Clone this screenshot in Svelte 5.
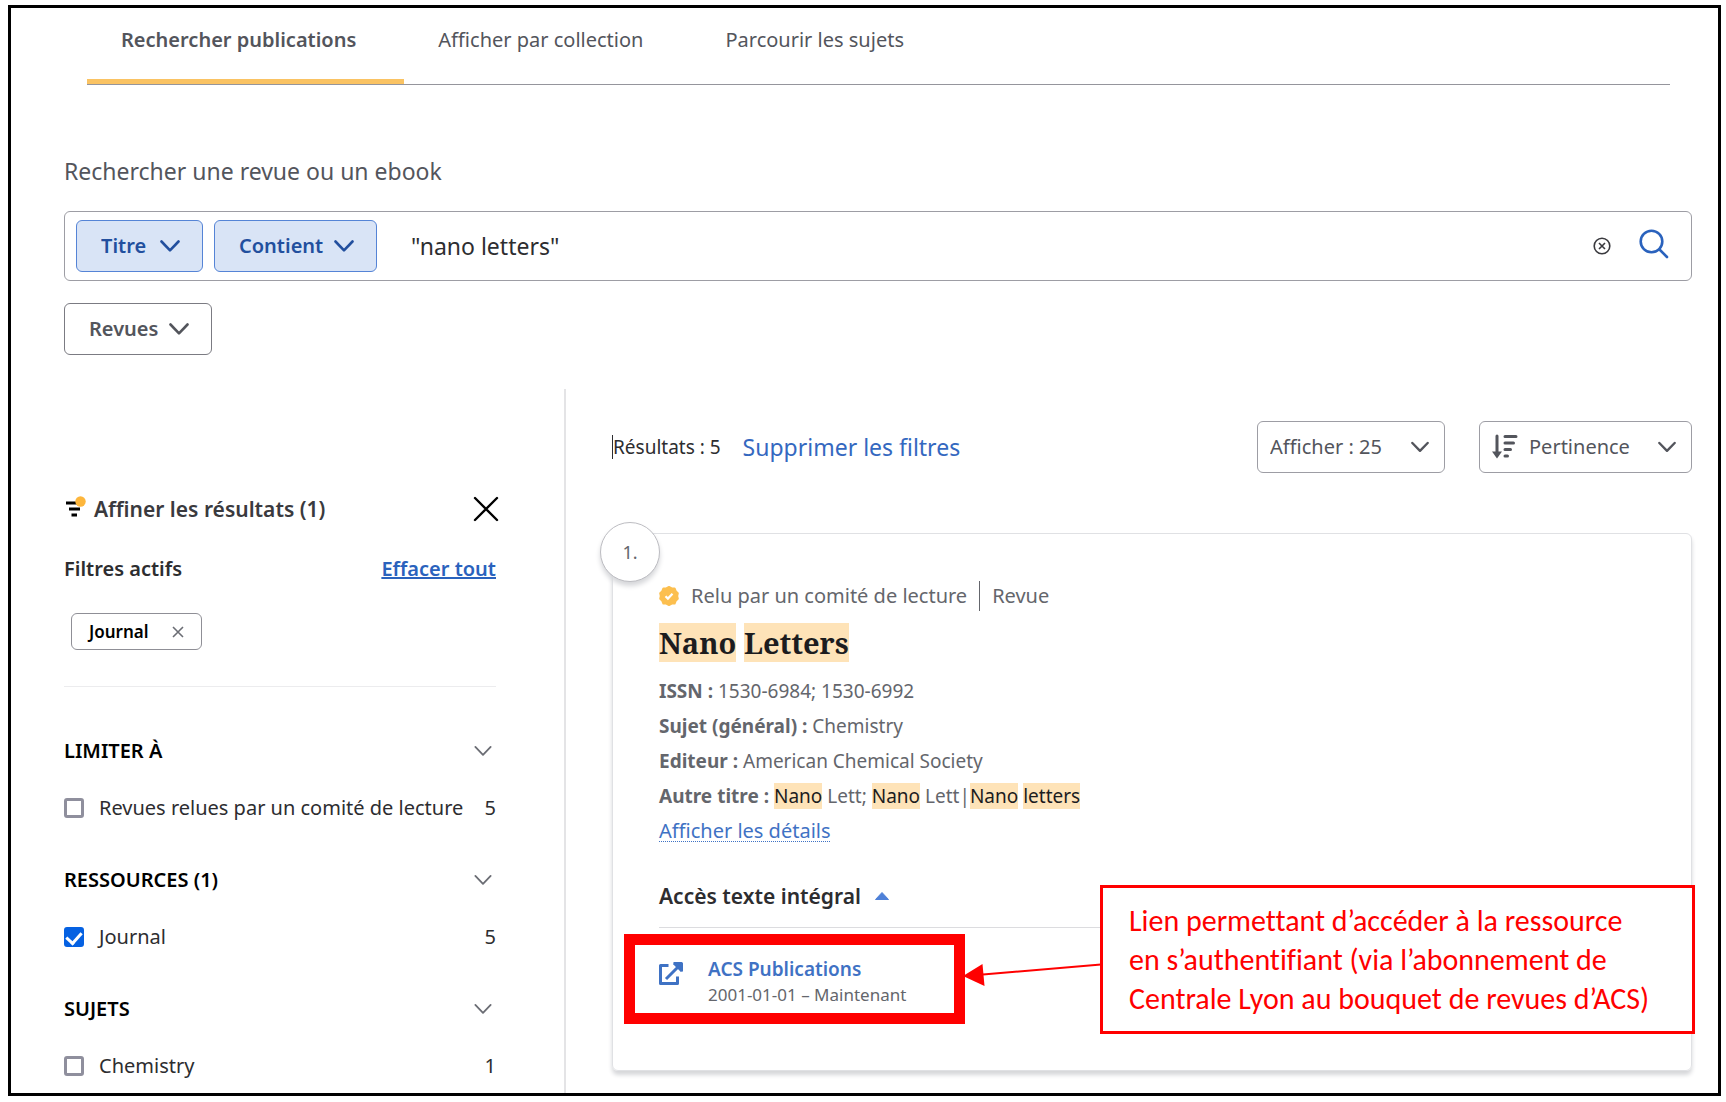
<script>
  const tabs = ['Rechercher publications', 'Afficher par collection', 'Parcourir les sujets'];
  const groups = [
    { title: 'LIMITER À', item: 'Revues relues par un comité de lecture', count: 5, checked: false },
    { title: 'RESSOURCES (1)', item: 'Journal', count: 5, checked: true },
    { title: 'SUJETS', item: 'Chemistry', count: 1, checked: false }
  ];
  let query = $state('"nano letters"');
</script>

{#snippet chevron(cls)}
  <svg class="chevron {cls}" viewBox="0 0 20 12" aria-hidden="true"><path d="M1.5 1.5 10 10.3l8.500-8.800" /></svg>
{/snippet}

<div class="page">
  <div class="frame">
    <nav class="tabs">
      {#each tabs as tab, i}
        <a href="#tab-{i}" class="tab" class:active={i === 0}>{tab}</a>
      {/each}
    </nav>

    <div class="content">
      <form class="search" onsubmit={(e) => e.preventDefault()}>
        <label class="search-label" for="query">Rechercher une revue ou un ebook</label>
        <div class="search-box">
          <span class="picker blue">
            <select aria-label="Champ"><option>Titre</option></select>
            {@render chevron('')}
          </span>
          <span class="picker blue">
            <select aria-label="Opérateur"><option>Contient</option></select>
            {@render chevron('')}
          </span>
          <input id="query" type="text" bind:value={query} />
          <button type="button" class="plain" aria-label="Effacer la recherche" onclick={() => (query = '')}>
            <svg class="clear" viewBox="0 0 18 18"><circle cx="9" cy="9" r="7.800" /><path d="m6 6 6 6M12 6l-6 6" /></svg>
          </button>
          <button type="submit" class="plain go" aria-label="Rechercher">
            <svg class="magnifier" viewBox="0 0 32 32"><circle cx="13.500" cy="13.500" r="10.800" /><path d="m21.500 21.500 7.500 7.500" /></svg>
          </button>
        </div>
        <span class="picker dark">
          <select aria-label="Type de publication"><option>Revues</option></select>
          {@render chevron('')}
        </span>
      </form>

      <div class="columns">
        <aside>
          <div class="row refine">
            <h2>
              <svg class="filter" viewBox="0 0 21 22" aria-hidden="true">
                <path d="M2 7h12M5 13h11M7.500 19h5.500" />
                <circle cx="16.500" cy="5.500" r="5.200" />
              </svg>
              Affiner les résultats (1)
            </h2>
            <button type="button" class="plain" aria-label="Fermer">
              <svg class="close" viewBox="0 0 26 26"><path d="m2 2 22 22M24 2 2 24" /></svg>
            </button>
          </div>
          <div class="row active-filters">
            <h3>Filtres actifs</h3>
            <a href="#clear">Effacer tout</a>
          </div>
          <button type="button" class="chip">
            Journal
            <svg viewBox="0 0 12 12" aria-hidden="true"><path d="m1 1 10 10M11 1 1 11" /></svg>
          </button>
          <hr />
          {#each groups as group}
            <section class="group">
              <button type="button" class="plain row group-title">
                {group.title}
                {@render chevron('thin')}
              </button>
              <label class="option">
                <input type="checkbox" checked={group.checked} />
                <span class="option-name">{group.item}</span>
                <span>{group.count}</span>
              </label>
            </section>
          {/each}
        </aside>

        <main>
          <div class="toolbar">
            <span class="count">Résultats : 5</span>
            <a href="#reset">Supprimer les filtres</a>
            <span class="picker light size">
              <select aria-label="Résultats par page"><option>Afficher : 25</option></select>
              {@render chevron('small')}
            </span>
            <span class="picker light sort">
              <svg class="sort-icon" viewBox="0 0 26 26" aria-hidden="true">
                <path d="M5 2v19M13 2.500h11M13 9h8.500M13 15.500h5.500M13 22h2.500" />
                <path class="head" d="M0 17.500h10L5 24.500z" />
              </svg>
              <select aria-label="Trier par"><option>Pertinence</option></select>
              {@render chevron('small')}
            </span>
          </div>

          <article class="card">
            <span class="rank">1.</span>
            <div class="kind">
              <svg class="seal" viewBox="0 0 20 20" aria-hidden="true">
                <path class="disc" d="M10 1 12.700 2.400 15.600 2.400 16.700 5.200 18.800 7.200 18.200 10 18.800 12.800 16.700 14.800 15.600 17.600 12.700 17.600 10 19 7.300 17.600 4.400 17.600 3.300 14.800 1.200 12.800 1.800 10 1.200 7.200 3.300 5.200 4.400 2.400 7.300 2.400z" />
                <path class="tick" d="m6.500 10.200 2.400 2.400 4.600-4.800" />
              </svg>
              <span class="reviewed">Relu par un comité de lecture</span>
              <span class="type">Revue</span>
            </div>
            <h1><mark>Nano</mark> <mark>Letters</mark></h1>
            <ul class="meta">
              <li><b>ISSN :</b> 1530-6984; 1530-6992</li>
              <li><b>Sujet (général) :</b> Chemistry</li>
              <li><b>Editeur :</b> American Chemical Society</li>
              <li><b>Autre titre :</b> <mark>Nano</mark> Lett; <mark>Nano</mark> Lett|<mark>Nano</mark> <mark>letters</mark></li>
              <li><a href="#details">Afficher les détails</a></li>
            </ul>
            <button type="button" class="plain access">
              Accès texte intégral
              <svg viewBox="0 0 16 10" aria-hidden="true"><path d="M8 1.500 14.500 8.500h-13z" /></svg>
            </button>
            <div class="links">
              <div class="source">
                <svg viewBox="0 0 24 24" aria-hidden="true">
                  <path d="M9.500 3.500H1.500v18h17V14.500M14.500 1.500h8v8M21 3 7 17" />
                  <path class="tip" d="M16 2h6v6z" />
                </svg>
                <div>
                  <a href="#acs">ACS Publications</a>
                  <p>2001-01-01 – Maintenant</p>
                </div>
              </div>
              <svg class="arrow" viewBox="0 0 138 26" aria-hidden="true">
                <path d="M20 13.500 138 3.500" />
                <path class="head" d="M0 15 19.500 3 21.500 25z" />
              </svg>
              <p class="note">
                Lien permettant d’accéder à la ressource<br />en s’authentifiant (via l’abonnement de<br />Centrale Lyon au bouquet de revues d’ACS)
              </p>
            </div>
          </article>
        </main>
      </div>
    </div>
  </div>
</div>

<style>
  :global(body) {
    background: #fff;
  }
  * {
    box-sizing: border-box;
  }
  .page {
    padding: 5px 5px 5px 8px;
    font: 400 20px/28px 'Noto Sans', 'Open Sans', sans-serif;
    color: #2d2d30;
  }
  .frame {
    border: 3px solid #000;
  }
  h1, h2, h3, p, ul {
    margin: 0;
    padding: 0;
  }
  a {
    color: #2a62bd;
  }
  svg {
    fill: none;
    flex: none;
  }
  select, input, button {
    font: inherit;
    color: inherit;
    margin: 0;
  }
  .plain {
    border: 0;
    padding: 0;
    background: none;
    display: flex;
    cursor: pointer;
  }

  .tabs {
    display: flex;
    margin: 0 48px 0 76px;
    border-bottom: 1px solid #95959c;
  }
  .tab {
    padding: 18px 48px 25px 34px;
    border-bottom: 5px solid transparent;
    color: #53555c;
    text-decoration: none;
  }
  .tab.active {
    border-color: #fac363;
    font-weight: 600;
  }

  .content {
    padding: 70px 26px 0 53px;
  }
  .search-label {
    display: block;
    font-size: 23px;
    line-height: 32px;
    color: #53555c;
    margin-bottom: 24px;
  }
  .search-box {
    display: flex;
    align-items: center;
    gap: 11px;
    padding: 8px 21px 8px 11px;
    border: 1px solid #9d9da4;
    border-radius: 6px;
    margin-bottom: 22px;
  }
  .search-box input {
    flex: 1;
    min-width: 0;
    border: 0;
    outline: 0;
    padding: 0 0 0 23px;
    font-size: 23px;
    line-height: 32px;
    background: none;
  }
  .clear {
    width: 18px;
    height: 18px;
    stroke: #3a3a3e;
    stroke-width: 1.6;
  }
  .go {
    margin-left: 16px;
    padding-bottom: 4px;
  }
  .magnifier {
    width: 32px;
    height: 32px;
    stroke: #2a62bd;
    stroke-width: 2.6;
    stroke-linecap: round;
  }

  .picker {
    display: inline-grid;
    align-items: center;
    min-width: 127px;
    border: 1px solid #7b7b82;
    border-radius: 6px;
    height: 52px;
    font-weight: 600;
    color: #53555c;
  }
  .picker > * {
    grid-area: 1 / 1;
  }
  .picker select {
    appearance: none;
    border: 0;
    outline: 0;
    background: none;
    height: 50px;
    padding: 0 52px 0 24px;
  }
  .chevron {
    width: 20px;
    height: 12px;
    stroke: currentColor;
    stroke-width: 2.600;
    stroke-linecap: round;
    stroke-linejoin: round;
    justify-self: end;
    margin-right: 22px;
    pointer-events: none;
  }
  .chevron.small {
    width: 18px;
    margin-right: 15px;
  }
  .chevron.thin {
    width: 18px;
    stroke-width: 2;
    color: #6b6d74;
    margin-right: 4px;
  }
  .blue {
    border-color: #5584d6;
    background: #d9e4f6;
    color: #224f9e;
  }
  .light {
    border-color: #9d9da4;
    font-weight: 400;
  }
  .picker.light select {
    padding: 0 62px 0 12px;
  }
  .picker.sort select {
    padding: 0 61px 0 49px;
  }
  .sort-icon {
    width: 26px;
    height: 26px;
    margin-left: 12px;
    stroke: #53555c;
    stroke-width: 3;
    stroke-linecap: round;
    pointer-events: none;
  }
  .sort-icon .head {
    fill: #53555c;
    stroke: none;
  }

  .columns {
    display: flex;
    margin-top: 34px;
  }
  aside {
    flex: none;
    width: 502px;
    padding: 104px 68px 13px 0;
    border-right: 2px solid #e4e4e6;
  }
  .row {
    display: flex;
    align-items: center;
    justify-content: space-between;
  }
  h2, h3 {
    font-size: 20px;
    line-height: 32px;
    font-weight: 600;
  }
  h2 {
    display: flex;
    align-items: center;
    gap: 9px;
    font-size: 21px;
    color: #3a3a3e;
  }
  .filter {
    width: 21px;
    height: 22px;
    margin-bottom: 4px;
    overflow: visible;
    stroke: #000;
    stroke-width: 3;
  }
  .filter circle {
    fill: #fdb63c;
    stroke: none;
  }
  .close {
    width: 26px;
    height: 26px;
    margin-right: -3px;
    stroke: #000;
    stroke-width: 2.400;
    stroke-linecap: round;
  }
  .active-filters {
    margin-top: 30px;
    font-weight: 600;
  }
  .active-filters h3 {
    line-height: 28px;
  }
  .chip {
    display: flex;
    align-items: center;
    gap: 23px;
    height: 37px;
    margin: 30px 0 0 7px;
    padding: 0 17px;
    border: 1px solid #8f8f96;
    border-radius: 6px;
    background: none;
    font-size: 17px;
    font-weight: 600;
    color: #000;
  }
  .chip svg {
    width: 12px;
    height: 12px;
    stroke: #6b6d74;
    stroke-width: 1.600;
  }
  hr {
    border: 0;
    border-top: 1px solid #ececee;
    margin: 36px 0 50px;
  }
  .group + .group {
    margin-top: 44px;
  }
  .group-title {
    width: 100%;
    font-weight: 600;
    color: #000;
  }
  .option {
    display: flex;
    align-items: center;
    gap: 15px;
    margin-top: 29px;
  }
  .option-name {
    flex: 1;
    white-space: nowrap;
  }
  .option input {
    appearance: none;
    flex: none;
    width: 20px;
    height: 20px;
    border: 3px solid #8f8f9d;
    border-radius: 3px;
  }
  .option input:checked {
    border-color: #0561e2;
    background: #0561e2;
    display: grid;
    place-items: center;
  }
  .option input:checked::after {
    content: '';
    width: 7px;
    height: 12px;
    border: solid #fff;
    border-width: 0 3px 3px 0;
    transform: translateY(-1px) rotate(42deg);
  }

  main {
    flex: 1;
    min-width: 0;
    padding: 32px 0 20px 46px;
  }
  .toolbar {
    display: flex;
    align-items: center;
  }
  .count {
    font-size: 19px;
    line-height: 24px;
    border-left: 1px solid #2d2d30;
    margin-right: 22px;
  }
  .toolbar a {
    font-size: 23px;
    line-height: 32px;
    text-decoration: none;
    color: #3468c0;
    margin-right: auto;
  }
  .size {
    margin-right: 34px;
  }

  .card {
    position: relative;
    margin-top: 60px;
    padding: 47px 21px 46px 46px;
    border: 1px solid #e0e1e4;
    border-radius: 6px;
    box-shadow: 0 4px 4px #d6d7da;
    color: #64666c;
  }
  .rank {
    position: absolute;
    left: -13px;
    top: -12px;
    width: 60px;
    height: 60px;
    display: grid;
    place-items: center;
    border: 1px solid #bdbdc2;
    border-radius: 50%;
    background: #fff;
    box-shadow: 0 4px 5px #d6d7da;
    font-size: 18px;
  }
  .kind {
    display: flex;
    align-items: center;
    line-height: 30px;
  }
  .seal {
    width: 20px;
    height: 20px;
    margin-right: 12px;
  }
  .disc {
    fill: #fcbf4f;
    stroke: #fcbf4f;
    stroke-width: 2;
    stroke-linejoin: round;
  }
  .tick {
    stroke: #fff;
    stroke-width: 2.200;
  }
  .type {
    margin-left: 12px;
    padding-left: 12px;
    border-left: 1px solid #64666c;
  }
  mark {
    background: #fee3b8;
    color: #1c1c1e;
  }
  h1 {
    margin-top: 12px;
    font: 700 29px/40px 'Noto Serif', 'DejaVu Serif', serif;
  }
  .meta {
    margin-top: 11px;
    list-style: none;
    font-size: 19px;
    line-height: 35px;
  }
  .meta a {
    color: #3f72c4;
    font-size: 20px;
    line-height: 24px;
    text-decoration: underline dotted 1px;
    text-underline-offset: 3px;
  }
  .access {
    width: 100%;
    align-items: center;
    gap: 13px;
    margin-top: 32px;
    padding-bottom: 16px;
    border-bottom: 1px solid #dcdcdf;
    font-size: 21px;
    line-height: 30px;
    font-weight: 600;
    color: #2d2d30;
  }
  .access svg {
    width: 16px;
    height: 10px;
    fill: #4f81d8;
    stroke: #4f81d8;
    stroke-linejoin: round;
  }
  .links {
    position: relative;
    display: flex;
    margin: 6px 0 0 -35px;
  }
  .source {
    display: flex;
    gap: 25px;
    padding: 11px 48px 5px 24px;
    border: 11px solid #f00;
    line-height: 26px;
    font-size: 17px;
  }
  .source svg {
    width: 24px;
    height: 24px;
    margin-top: 6px;
    stroke: #3f72c4;
    stroke-width: 3;
    stroke-linejoin: round;
  }
  .source .tip {
    fill: #3f72c4;
  }
  .source a {
    display: block;
    font-size: 19px;
    font-weight: 600;
    color: #3f72c4;
    text-decoration: none;
  }
  .arrow {
    position: absolute;
    left: 339px;
    top: 27px;
    width: 138px;
    height: 26px;
    stroke: #f00;
    stroke-width: 2;
  }
  .arrow .head {
    fill: #f00;
    stroke: none;
  }
  .note {
    position: absolute;
    left: 476px;
    top: -49px;
    width: 595px;
    padding: 13px 26px;
    border: 3px solid #f00;
    background: #fff;
    color: #f00;
    font: 400 30px/39px Carlito, Lato, sans-serif;
    font-variant-ligatures: none;
    white-space: nowrap;
  }
</style>
